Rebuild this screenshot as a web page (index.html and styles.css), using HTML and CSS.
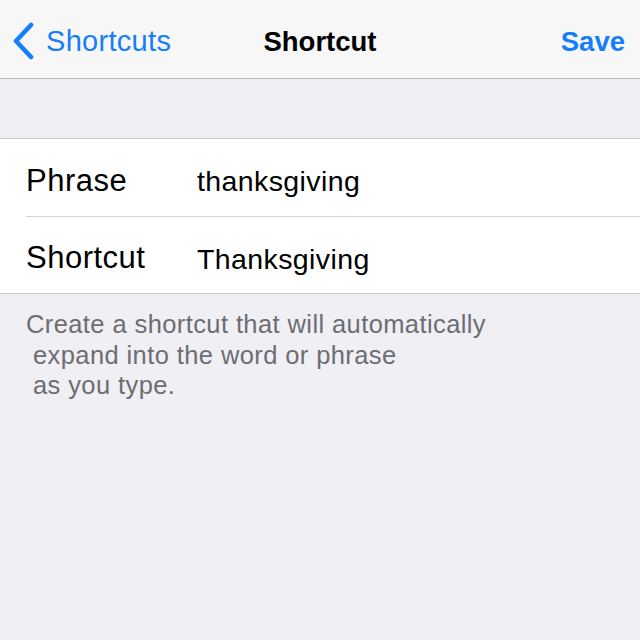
FILE: index.html
```html
<!DOCTYPE html>
<html>
<head>
<meta charset="utf-8">
<link rel="stylesheet" href="styles.css">
</head>
<body>
<div class="screen">
  <header class="nav">
    <div class="nav-left">
      <svg class="chev" width="24" height="38" viewBox="0 0 24 38"><path d="M20 3 L5 19 L20 35" fill="none" stroke="#157efb" stroke-width="4.6" stroke-linecap="round" stroke-linejoin="round"/></svg>
      <span class="back">Shortcuts</span>
    </div>
    <div class="nav-title">Shortcut</div>
    <div class="nav-right"><span class="save">Save</span></div>
  </header>
  <div class="spacer"></div>
  <section class="table">
    <div class="row">
      <span class="label">Phrase</span>
      <span class="value">thanksgiving</span>
    </div>
    <div class="row">
      <span class="label">Shortcut</span>
      <span class="value">Thanksgiving</span>
    </div>
  </section>
  <div class="footer">
    <span class="line">Create a shortcut that will automatically</span>
    <span class="line indent">expand into the word or phrase</span>
    <span class="line indent">as you type.</span>
  </div>
</div>
</body>
</html>
```
FILE: styles.css
```css
html, body {
  margin: 0;
  padding: 0;
}
body {
  background: #efeff4;
  font-family: "Liberation Sans", Arial, sans-serif;
  width: 640px;
  height: 640px;
  overflow: hidden;
}
.screen {
  width: 640px;
  height: 640px;
  display: flex;
  flex-direction: column;
}
.nav {
  height: 78px;
  background: #f7f7f8;
  border-bottom: 1px solid #b9b9bd;
  display: grid;
  grid-template-columns: 1fr auto 1fr;
  align-items: center;
  flex-shrink: 0;
}
.nav-left {
  display: flex;
  align-items: center;
  padding-left: 11px;
  gap: 11px;
}
.chev {
  display: block;
  margin-top: 3px;
}
.back {
  color: #157efb;
  font-size: 29px;
  letter-spacing: 0.3px;
  padding-top: 5px;
}
.nav-title {
  font-weight: bold;
  font-size: 27.5px;
  color: #000;
  padding-top: 5px;
}
.nav-right {
  display: flex;
  justify-content: flex-end;
  padding-right: 15px;
}
.save {
  color: #157efb;
  font-weight: bold;
  font-size: 27.5px;
  padding-top: 5px;
}
.spacer {
  height: 59px;
  flex-shrink: 0;
}
.table {
  background: #fff;
  border-top: 1px solid #c8c7cc;
  border-bottom: 1px solid #c8c7cc;
  padding-left: 26px;
}
.row {
  height: 77px;
  display: flex;
  align-items: center;
}
.row + .row {
  border-top: 1px solid #d4d4d8;
  height: 76px;
}
.label {
  width: 171px;
  font-size: 31px;
  letter-spacing: 0.5px;
  color: #000;
  padding-top: 6px;
}
.value {
  font-size: 28.5px;
  letter-spacing: 0.4px;
  color: #000;
  padding-top: 8px;
}
.footer {
  padding: 15px 0 0 26px;
  color: #6d6d72;
  font-size: 25.5px;
  letter-spacing: 0.4px;
  line-height: 30.5px;
}
.line {
  display: block;
}
.indent {
  padding-left: 7px;
}
```
